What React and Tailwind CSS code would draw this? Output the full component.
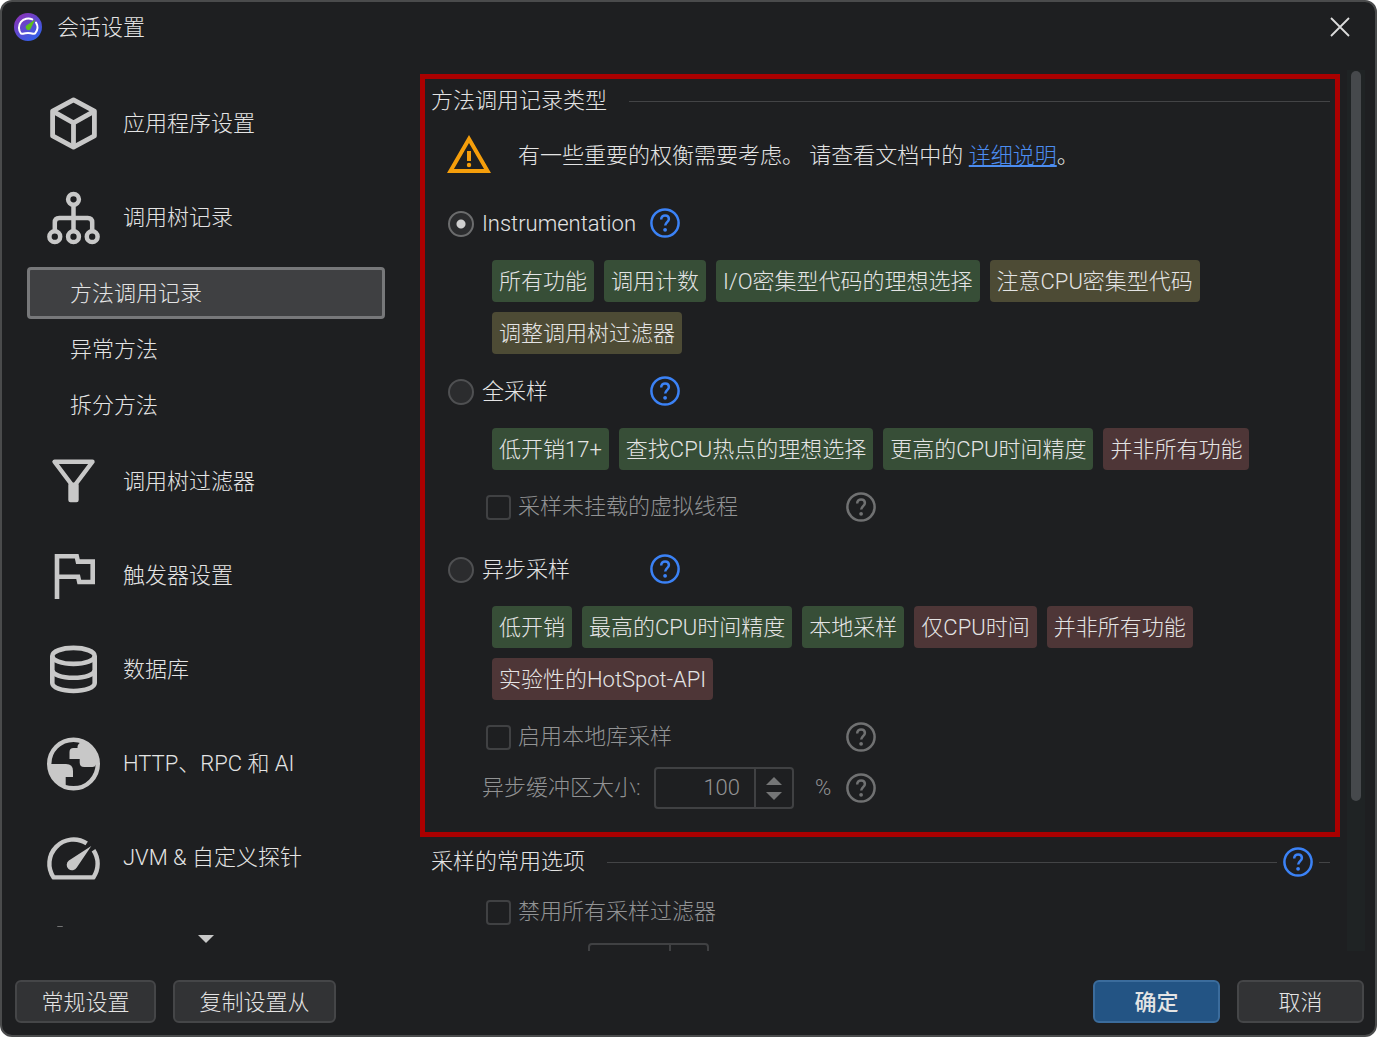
import React, { useState } from "react";

const CubeIcon = () => (
  <svg viewBox="0 0 56 56" className="size-14" fill="none" stroke="currentColor" strokeWidth="4.8" strokeLinejoin="round" aria-hidden="true">
    <path d="M27.5 4.8 48.4 16.1V40.9L27.5 52.2 6.6 40.9V16.1Z" />
    <path d="M6.6 16.1 27.5 27.8 48.4 16.1M27.5 27.8V52.2" />
  </svg>
);

const TreeIcon = () => (
  <svg viewBox="0 0 56 56" className="size-14" fill="none" stroke="currentColor" strokeWidth="4.5" aria-hidden="true">
    <circle cx="27.5" cy="10.3" r="5.4" />
    <circle cx="8.8" cy="47.7" r="5.4" />
    <circle cx="27.5" cy="47.7" r="5.4" />
    <circle cx="46.2" cy="47.7" r="5.4" />
    <path d="M27.5 15.5V42.5M8.8 42.5V33.5q0-4.5 4.5-4.5H41.7q4.5 0 4.5 4.5V42.5" />
  </svg>
);

const FunnelIcon = () => (
  <svg viewBox="0 0 56 56" className="size-14" fill="none" stroke="currentColor" strokeWidth="4.4" strokeLinejoin="round" aria-hidden="true">
    <path d="M8.5 8.8H46.5L29 32H26Z" />
    <path d="M24.5 32H30.5V47H24.5Z" fill="currentColor" />
    <path d="M27.5 31V36" strokeWidth="8" />
  </svg>
);

const FlagIcon = () => (
  <svg viewBox="0 0 56 56" className="size-14" fill="none" stroke="currentColor" strokeWidth="4.6" aria-hidden="true">
    <path d="M11 52V9.3H30.7L31.9 14.6H46.7V35H33.3L32.1 29.7H11" />
  </svg>
);

const DatabaseIcon = () => (
  <svg viewBox="0 0 56 56" className="size-14" fill="none" stroke="currentColor" strokeWidth="4.6" aria-hidden="true">
    <ellipse cx="27.5" cy="14.9" rx="21.2" ry="8" />
    <path d="M6.3 14.9V42C6.3 46.5 15.5 50 27.5 50S48.7 46.5 48.7 42V14.9" />
    <path d="M6.3 29C6.3 33.5 15.5 36.8 27.5 36.8S48.7 33.5 48.7 29" />
  </svg>
);

const GlobeIcon = () => (
  <svg viewBox="0.5 -1 56 56" className="size-14" aria-hidden="true">
    <circle cx="28" cy="28" r="24.3" fill="none" stroke="currentColor" strokeWidth="4.4" />
    <path
      fill="currentColor"
      d="M35 4.5C34.6 6.5 34.2 7 33 8.2 32.2 9 32 10 32 12H28Q24 12 24 16V23H34.2V26.5Q34.2 31 38.7 31H47Q49.5 31 50.5 28.5L51 22 47 13 40 7Z"
    />
    <path fill="currentColor" d="M4 28H20.5Q27.5 28 27.5 35V41H20.2V50L12 46 6 38Z" />
  </svg>
);

const GaugeIcon = () => (
  <svg viewBox="0.5 0 56 56" className="size-14" aria-hidden="true">
    <path
      d="M41.2 14.4A24.2 24.2 0 0 0 8.1 48.4H47.9A24.2 24.2 0 0 0 48 21.2"
      fill="none"
      stroke="currentColor"
      strokeWidth="4.4"
      strokeLinejoin="round"
    />
    <path d="M45.8 17 31.3 38.6A5.4 5.4 0 1 1 23.4 31.6Z" fill="currentColor" />
  </svg>
);

const MoreIcon = () => (
  <svg viewBox="0 0 56 56" className="size-14" aria-hidden="true">
    <path d="M11.5 3H16.5L20 10H8Z" fill="currentColor" opacity="0.5" />
  </svg>
);

const HelpButton = ({ disabled = false, label }) => (
  <button
    type="button"
    disabled={disabled}
    aria-label={label}
    className="size-[30px] shrink-0 text-[#3b82f6] disabled:text-[#707172]"
  >
    <svg viewBox="0 0 30 30" className="size-[30px]" fill="none" stroke="currentColor" aria-hidden="true">
      <circle cx="15" cy="15" r="13.6" strokeWidth="2.5" />
      <path d="M11.2 11.4C11.2 9 12.9 7.4 15.1 7.4s3.8 1.5 3.8 3.6c0 2.9-3.7 3.3-3.7 6.6" strokeWidth="2.5" />
      <circle cx="15.1" cy="21.8" r="1.9" fill="currentColor" stroke="none" />
    </svg>
  </button>
);

const navItems = [
  { label: "应用程序设置", icon: CubeIcon },
  {
    label: "调用树记录",
    icon: TreeIcon,
    children: ["方法调用记录", "异常方法", "拆分方法"],
  },
  { label: "调用树过滤器", icon: FunnelIcon },
  { label: "触发器设置", icon: FlagIcon },
  { label: "数据库", icon: DatabaseIcon },
  { label: "HTTP、RPC 和 AI", icon: GlobeIcon },
  { label: "JVM & 自定义探针", icon: GaugeIcon },
  { label: "", icon: MoreIcon },
];

const tagColors = {
  good: "bg-[#374e37]",
  warn: "bg-[#4d4b35]",
  bad: "bg-[#4e3637]",
};

const Tags = ({ items }) => (
  <ul className="mt-[22px] ml-[67px] flex flex-wrap gap-[10px]">
    {items.map(([text, kind]) => (
      <li key={text} className={`h-[42px] rounded px-[7px] leading-[44px] whitespace-nowrap ${tagColors[kind]}`}>
        {text}
      </li>
    ))}
  </ul>
);

const ModeRow = ({ value, label, mode, setMode }) => (
  <div className="ml-[23px] flex h-[30px] items-center">
    <label className="flex w-[202px] items-center gap-2 pt-0.5">
      <input
        type="radio"
        name="recording-mode"
        value={value}
        checked={mode === value}
        onChange={() => setMode(value)}
        className="size-[26px] appearance-none rounded-full border-2 border-[#4f5052] bg-[#2b2c2e] checked:border-[#6b6c6d] checked:bg-[radial-gradient(circle,#cfcfcf_4px,transparent_5px)]"
      />
      {label}
    </label>
    <HelpButton label={`${label} ?`} />
  </div>
);

const DisabledCheck = ({ label, help }) => (
  <div className="ml-[61px] flex h-[30px] items-center text-[#929394]">
    <label className="flex w-[360px] items-center gap-[7px]">
      <input type="checkbox" disabled className="size-[25px] appearance-none rounded border-2 border-[#404143]" />
      {label}
    </label>
    {help && <HelpButton disabled label={`${label} ?`} />}
  </div>
);

const Spinner = ({ id, value, inputClass }) => (
  <div className="flex h-[42px] rounded border-2 border-[#404143]">
    <input
      id={id}
      type="text"
      inputMode="numeric"
      disabled
      defaultValue={value}
      aria-label={id}
      className={`${inputClass} bg-transparent pr-[14px] text-right`}
    />
    <div className="flex w-[38px] flex-col items-center justify-center gap-[7px] border-l-2 border-[#404143] text-[#757677]">
      <button type="button" disabled aria-label="+">
        <svg viewBox="0 0 16 8" className="h-2 w-4" fill="currentColor"><path d="M0 8 8 0l8 8z" /></svg>
      </button>
      <button type="button" disabled aria-label="-">
        <svg viewBox="0 0 16 8" className="h-2 w-4" fill="currentColor"><path d="M0 0h16L8 8z" /></svg>
      </button>
    </div>
  </div>
);

const Sidebar = () => {
  const [active, setActive] = useState("方法调用记录");

  return (
    <nav className="flex w-[383px] shrink-0 flex-col pt-6 pl-[25px]">
      <ul className="min-h-0 flex-1 overflow-hidden">
        {navItems.map(({ label, icon: Icon, children }) => (
          <li key={label}>
            <button type="button" className="flex h-[94px] w-full items-center gap-[21px] pl-[19px] text-left">
              <span className="text-[#c8c8c8]">
                <Icon />
              </span>
              <span className="pt-0.5">{label}</span>
            </button>
            {children && (
              <ul className="py-px">
                {children.map((child) => (
                  <li key={child} className="flex h-14 items-center">
                    <button
                      type="button"
                      onClick={() => setActive(child)}
                      className={`h-[52px] w-full rounded border-3 pt-0.5 pl-10 text-left ${
                        active === child
                          ? "border-[#77787a] bg-[#3f4042]"
                          : "border-transparent"
                      }`}
                    >
                      {child}
                    </button>
                  </li>
                ))}
              </ul>
            )}
          </li>
        ))}
      </ul>
      <button type="button" aria-label="▼" className="flex h-6 items-center justify-center text-[#c8c8c8]">
        <svg viewBox="0 0 16 8" className="h-2 w-4" fill="currentColor"><path d="M0 0h16L8 8z" /></svg>
      </button>
    </nav>
  );
};

const RecordingSettings = () => {
  const [mode, setMode] = useState("instrumentation");

  return (
    <main className="ml-[35px] min-w-0 flex-1 overflow-hidden pt-[22px]">
      <section className="border-5 border-[#aa0000] pb-[23px]">
        <div className="flex h-11 items-center gap-[22px] pr-[5px] pl-1.5">
          <h2>方法调用记录类型</h2>
          <div className="h-px flex-1 bg-[#434446]" />
        </div>

        <div className="mt-[11px] ml-[22px] flex h-10 items-center gap-[27px]">
          <svg viewBox="1 2 22 19" className="h-[38px] w-11 text-[#f59e0b]" fill="currentColor" aria-hidden="true">
            <path d="M12 5.99 19.53 19H4.47L12 5.99M12 2 1 21h22L12 2zM13 10h-2v5h2z" />
            <circle cx="12" cy="17" r="1.1" />
          </svg>
          <p className="pt-1">
            有一些重要的权衡需要考虑。 请查看文档中的{" "}
            <a href="#details" className="text-[#4c8df0] underline decoration-2 underline-offset-2">
              详细说明
            </a>
            。
          </p>
        </div>

        <div className="mt-[34px]">
          <ModeRow value="instrumentation" label="Instrumentation" mode={mode} setMode={setMode} />
          <Tags
            items={[
              ["所有功能", "good"],
              ["调用计数", "good"],
              ["I/O密集型代码的理想选择", "good"],
              ["注意CPU密集型代码", "warn"],
              ["调整调用树过滤器", "warn"],
            ]}
          />
        </div>

        <div className="mt-[22px]">
          <ModeRow value="full" label="全采样" mode={mode} setMode={setMode} />
          <Tags
            items={[
              ["低开销17+", "good"],
              ["查找CPU热点的理想选择", "good"],
              ["更高的CPU时间精度", "good"],
              ["并非所有功能", "bad"],
            ]}
          />
          <div className="mt-[22px]">
            <DisabledCheck label="采样未挂载的虚拟线程" help />
          </div>
        </div>

        <div className="mt-8">
          <ModeRow value="async" label="异步采样" mode={mode} setMode={setMode} />
          <Tags
            items={[
              ["低开销", "good"],
              ["最高的CPU时间精度", "good"],
              ["本地采样", "good"],
              ["仅CPU时间", "bad"],
              ["并非所有功能", "bad"],
              ["实验性的HotSpot-API", "bad"],
            ]}
          />
          <div className="mt-[22px]">
            <DisabledCheck label="启用本地库采样" help />
          </div>
          <div className="mt-[15px] ml-[57px] flex items-center text-[#929394]">
            <label htmlFor="async-buffer" className="w-[172px]">
              异步缓冲区大小:
            </label>
            <Spinner id="async-buffer" value="100" inputClass="w-[98px]" />
            <span className="w-[52px] pl-[21px]">%</span>
            <HelpButton disabled label="异步缓冲区大小 ?" />
          </div>
        </div>
      </section>

      <section className="mt-1 pr-[10px] pl-[11px]">
        <div className="flex h-[42px] items-center">
          <h2 className="mr-[22px]">采样的常用选项</h2>
          <div className="h-px flex-1 bg-[#434446]" />
          <div className="mx-1.5 flex">
            <HelpButton label="采样的常用选项 ?" />
          </div>
          <div className="h-px w-[11px] bg-[#434446]" />
        </div>
        <div className="mt-[14px] -ml-1.5">
          <DisabledCheck label="禁用所有采样过滤器" />
        </div>
        <div className="mt-4 ml-[157px] flex">
          <Spinner id="sampling-frequency" value="" inputClass="w-[79px]" />
        </div>
      </section>
    </main>
  );
};

const buttonBase = "h-[43px] rounded-md border-2 pt-0.5 text-center";

const App = () => {
  return (
    <div className="h-screen bg-white">
      <div className="flex h-full flex-col overflow-hidden rounded-xl border-2 border-[#4a4b4c] bg-[#1e1f21] font-[Roboto,'Noto_Sans_CJK_SC',sans-serif] text-[22px] leading-[30px] font-light text-[#e4e4e4]">
        <header className="flex h-[50px] shrink-0 items-center pl-3">
          <svg viewBox="0 0 28 28" className="size-7" aria-hidden="true">
            <defs>
              <linearGradient id="logo" x1="0.1" y1="0" x2="0.8" y2="1">
                <stop offset="0" stopColor="#9030b4" />
                <stop offset="1" stopColor="#2c62ec" />
              </linearGradient>
            </defs>
            <circle cx="14" cy="14" r="14" fill="url(#logo)" />
            <path
              d="M18.3 6.4A9.3 9.3 0 0 0 7 20.6C8 21.5 9 20 14 20S20 21.5 21 20.6A9.3 9.3 0 0 0 22 9.6"
              fill="none"
              stroke="#fff"
              strokeWidth="2"
              strokeLinecap="round"
            />
            <path d="M21.2 6.6 16.6 16A2.7 2.7 0 1 1 12.4 12.6Z" fill="#5cbf1c" />
          </svg>
          <h1 className="ml-[15px] flex-1 pt-0.5">会话设置</h1>
          <button type="button" aria-label="✕" className="mr-[25px] text-[#dcdcdc]">
            <svg viewBox="0 0 20 20" className="size-5" fill="none" stroke="currentColor" strokeWidth="1.8" aria-hidden="true">
              <path d="M1 1 19 19M19 1 1 19" />
            </svg>
          </button>
        </header>

        <div className="flex min-h-0 flex-1">
          <Sidebar />
          <RecordingSettings />
          <div className="mt-[18px] mr-[10px] ml-[7px] w-[18px] bg-[#1f2324] px-1 pt-px">
            <div className="h-[83%] rounded-full bg-[#46494c]" />
          </div>
        </div>

        <footer className="flex shrink-0 gap-[17px] pt-[29px] pr-[11px] pb-3 pl-[13px]">
          <button type="button" className={`${buttonBase} w-[141px] border-[#454648] bg-[#323335]`}>
            常规设置
          </button>
          <button type="button" className={`${buttonBase} w-[163px] border-[#454648] bg-[#323335]`}>
            复制设置从
          </button>
          <button
            type="button"
            className={`${buttonBase} ml-auto w-[127px] border-[#3b6c9c] bg-[#235484] font-medium`}
          >
            确定
          </button>
          <button type="button" className={`${buttonBase} w-[127px] border-[#454648] bg-[#323335]`}>
            取消
          </button>
        </footer>
      </div>
    </div>
  );
};

export default App;
